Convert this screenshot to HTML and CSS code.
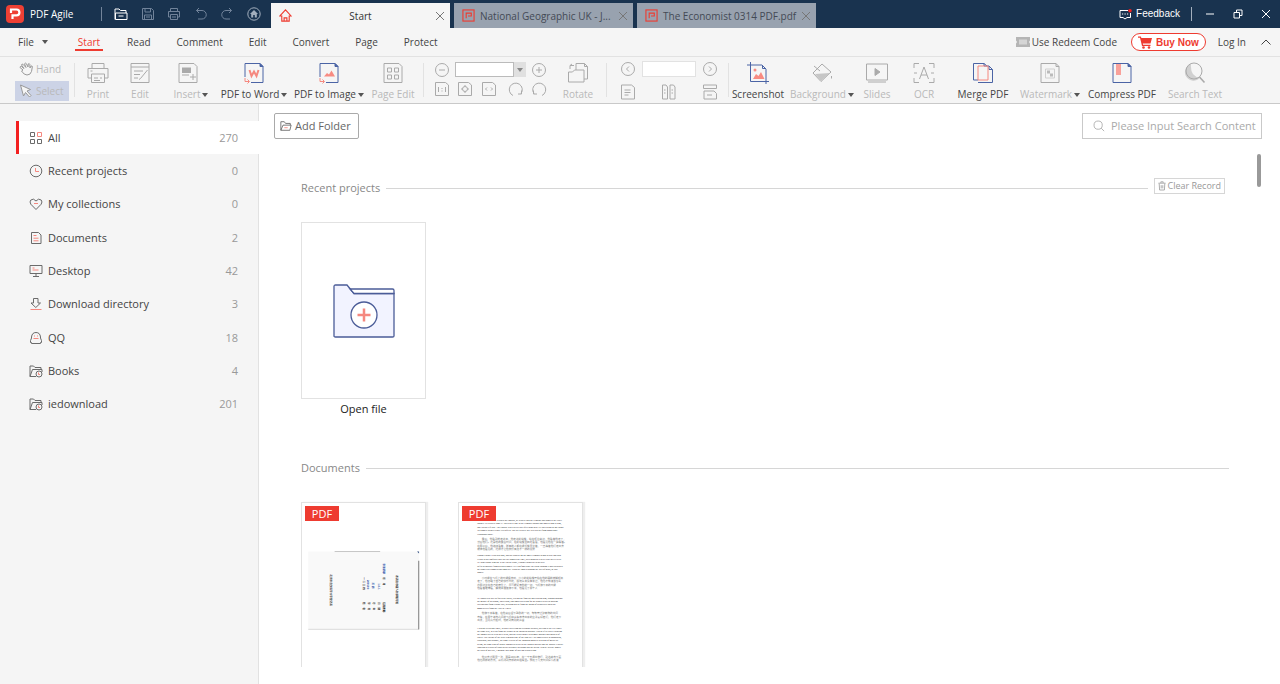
FILE: index.html
```html
<!DOCTYPE html>
<html lang="en">
<head>
<meta charset="utf-8">
<title>PDF Agile</title>
<link rel="stylesheet" href="styles.css">
</head>
<body>
<svg class="defs" aria-hidden="true">
  <symbol id="close" viewBox="0 0 10 10"><path d="M1 1l8 8M9 1l-8 8"/></symbol>
  <symbol id="pdf" viewBox="0 0 14 14"><rect x="1" y="1" width="12" height="12"/><path d="M4.500 10V4.500h5.500v3H6.500"/></symbol>
  <symbol id="clockfolder" viewBox="0 0 14 14"><path d="M1 12.500V2h3.500L6 3.500h6V5M1 12.500L3.500 5.500H13V8M1 12.500h6"/><circle cx="10" cy="10" r="3"/><path class="red" d="M9.500 8.500v2h1.500"/></symbol>
</svg>

<header class="titlebar">
  <svg class="logo" viewBox="0 0 18 18"><rect width="18" height="18" rx="4" fill="#ee4034"/><path d="M5 8V4.500h5.500a2.800 2.800 0 0 1 0 5.800H6.500V14" fill="none" stroke="#fff" stroke-width="2.200"/></svg>
  <h1 class="app-name">PDF Agile</h1>
  <div class="quick">
    <button class="on" aria-label="Open"><svg viewBox="0 0 14 14"><path d="M1 12.500V2h4l1.500 1.500H12V6M1.500 12.500V6H13v6.500zM4.500 9h5"/></svg></button>
    <button aria-label="Save"><svg viewBox="0 0 14 14"><path d="M1.500 1.500h9l2 2v9h-11zM4 1.500v3.500h5.500V1.500M3.500 12.500V8h7v4.500M5 10h4"/></svg></button>
    <button aria-label="Print"><svg viewBox="0 0 14 14"><path d="M3.500 4V1.500h7V4M3.500 10h-2V4.500h11V10h-2M3.500 7.500h7v5h-7zM5 10h4"/></svg></button>
    <button aria-label="Undo"><svg viewBox="0 0 14 14"><path d="M5 1L2.500 3.500 5 6M2.500 3.500H8a4.200 4.200 0 0 1 0 8.500H4"/></svg></button>
    <button aria-label="Redo"><svg viewBox="0 0 14 14"><path d="M9 1l2.500 2.500L9 6M11.500 3.500H6A4.200 4.200 0 0 0 6 12h4"/></svg></button>
    <button class="mid" aria-label="Home"><svg viewBox="0 0 14 14"><circle cx="7" cy="7" r="6.200"/><path d="M7 3L3 7h1.200v3.500h2V8h1.600v2.500h2V7H11z" fill="currentColor" stroke="none"/></svg></button>
  </div>
  <div class="tabs">
    <div class="tab active">
      <svg class="tab-icon" viewBox="0 0 14 14"><path d="M1 7.500L7 1l6 6.500H11V13H3V7.500zM5.500 13V9.500h3V13"/></svg>
      <span class="tab-name">Start</span>
      <button aria-label="Close"><svg><use href="#close"/></svg></button>
    </div>
    <div class="tab">
      <svg class="tab-icon"><use href="#pdf"/></svg>
      <span class="tab-name">National Geographic UK - J...</span>
      <button aria-label="Close"><svg><use href="#close"/></svg></button>
    </div>
    <div class="tab">
      <svg class="tab-icon"><use href="#pdf"/></svg>
      <span class="tab-name">The Economist 0314 PDF.pdf</span>
      <button aria-label="Close"><svg><use href="#close"/></svg></button>
    </div>
  </div>
  <div class="window">
    <button class="feedback"><svg viewBox="0 0 13 11"><path d="M9 1.500H1v7h3l2 1.500 2-1.500h3.500V4M3 5h1.200M5.500 5h1.200M8 5h1.200"/><circle cx="11" cy="1.800" r="1.800" fill="#f32020" stroke="none"/></svg>Feedback</button>
    <button class="win" aria-label="Minimize"><svg viewBox="0 0 10 10"><path d="M1 5h8"/></svg></button>
    <button class="win" aria-label="Restore"><svg viewBox="0 0 10 10"><path d="M1 3.500h5.500V9H1zM3.500 3.500V1H9v5.500H6.500"/></svg></button>
    <button class="win" aria-label="Close window"><svg><use href="#close"/></svg></button>
  </div>
</header>

<nav class="menu">
  <a class="file" href="#">File<i class="caret"></i></a>
  <a class="current" href="#">Start</a>
  <a href="#">Read</a>
  <a href="#">Comment</a>
  <a href="#">Edit</a>
  <a href="#">Convert</a>
  <a href="#">Page</a>
  <a href="#">Protect</a>
  <div class="account">
    <a class="redeem" href="#"><svg viewBox="0 0 14 10"><path d="M0 0h14v3.500l-1 1.500 1 1.500V10H0V6.500L1 5 0 3.500z" fill="#b5b5b5"/><path d="M4 2.500v5M6 2.500v5M8 2.500v5M10 2.500v5" stroke="#f5f5f5"/></svg>Use Redeem Code</a>
    <button class="buy"><svg viewBox="0 0 14 13"><path d="M0 .5h2.800l.6 1.500H14l-1.500 5.500H4.800l.3 1.200h7.400v1.300H4L2 1.800H0z" fill="#ee3b30"/><circle cx="5.500" cy="11.500" r="1.300" fill="#ee3b30"/><circle cx="11" cy="11.500" r="1.300" fill="#ee3b30"/></svg>Buy Now</button>
    <a class="login" href="#">Log In</a>
    <button class="fold" aria-label="Collapse ribbon"><svg viewBox="0 0 10 6"><path d="M.5 5.500L5 1l4.500 4.500"/></svg></button>
  </div>
</nav>

<section class="ribbon">
  <div class="modes">
    <button><svg viewBox="0 0 14 14"><path d="M4 8L1 5.500q0-1.500 1.500-1L5 6.500 2.500 3q.5-1.500 1.500-.7L7 5.500 5.500 1.800Q6.500.5 7.300 1.600L9 5l.2-3q1.200-1 1.600.3L11 6l1-2q1.500-.5 1.300 1l-.8 4.500q-1 3.500-4.500 3.500-3 0-5.500-4z"/></svg>Hand</button>
    <button class="picked"><svg viewBox="0 0 14 14"><path d="M1.500 1l10 4.500-3.500 1.500 4 4.500-1.500 1.500-4-4.500L4.500 12z" fill="#f5f5f5"/></svg>Select</button>
  </div>
  <div class="group">
    <button class="tool w42"><svg viewBox="0 0 22 22"><path d="M5 6V1.500h12V6M4.500 16H1V6.500h20V16h-3.500M4.500 12h13v8.500h-13zM7 16h4M13 16h2M7 18.500h6M3.500 9h2"/></svg><span>Print</span></button>
    <button class="tool w42"><svg viewBox="0 0 22 22"><path d="M2 1.500h18v19H2zM2 5h18M5 9h9M5 12.500h6M5 16h4M18.500 8l-7 8.500-1.500 1"/></svg><span>Edit</span></button>
    <button class="tool w60 insert"><svg viewBox="0 0 22 22"><path d="M2 1.500h15l3 3v16H2zM16 12v6M13 15h6M5 13h7"/><path d="M5 5.500h9V11H5z" fill="#aaa" stroke="none"/></svg><span>Insert<i class="caret"></i></span></button>
    <button class="tool on w66"><svg viewBox="0 0 22 22"><path class="navy" d="M2 15V1.500h15l3 3v16H8"/><path class="navy" d="M17 1.500v3h3z" fill="#4b64a5"/><path class="coral" d="M6.500 8l2 6 2.500-4.500 2.500 4.500 2-6" stroke-width="2"/><path class="coral" d="M2 16v3.500h4M4.500 17.500l2 2-2 2"/></svg><span>PDF to Word<i class="caret"></i></span></button>
    <button class="tool on w84"><svg viewBox="0 0 22 22"><path class="navy" d="M2 15V1.500h15l3 3v16H8"/><path class="navy" d="M17 1.500v3h3z" fill="#4b64a5"/><path d="M6 14.500l3-3.500 2 1.500 2.500-4L17 14.500z" fill="#f88b82" stroke="none"/><path class="coral" d="M2 16v3.500h4M4.500 17.500l2 2-2 2"/></svg><span>PDF to Image<i class="caret"></i></span></button>
    <button class="tool w44"><svg viewBox="0 0 22 22"><path d="M2 1.500h15l3 3v16H2zM5.500 6h4v4h-4zM12.500 6h4v4h-4zM5.500 13h4v4h-4zM12.500 13h4v4h-4z"/></svg><span>Page Edit</span></button>
  </div>
  <div class="group zoomers">
    <div class="stack">
      <div class="line">
        <button aria-label="Zoom out"><svg viewBox="0 0 16 16"><circle cx="8" cy="8" r="6.500"/><path d="M5 8h6"/></svg></button>
        <div class="combo"><input type="text" aria-label="Zoom level"><button aria-label="Zoom levels"><i class="caret"></i></button></div>
        <button aria-label="Zoom in"><svg viewBox="0 0 16 16"><circle cx="8" cy="8" r="6.500"/><path d="M5 8h6M8 5v6"/></svg></button>
      </div>
      <div class="line">
        <button aria-label="Actual size"><svg viewBox="0 0 16 16"><path d="M1.500 1.500h10L14.500 4v10.500h-13zM4.500 6v5M11.500 6v5M8 7v1M8 9.500v1"/></svg></button>
        <button aria-label="Fit page"><svg viewBox="0 0 16 16"><path d="M1.500 1.500h10L14.500 4v10.500h-13z"/><circle cx="8" cy="8" r="2.500"/><path d="M8 4v1.500M8 10.500V12M4 8h1.500M10.500 8H12"/></svg></button>
        <button aria-label="Fit width"><svg viewBox="0 0 16 16"><path d="M1.500 1.500h10L14.500 4v10.500h-13zM6 6.500L4.500 8 6 9.500M10 6.500L11.500 8 10 9.500"/></svg></button>
        <button class="turn" aria-label="Turn right"><svg viewBox="0 0 16 16"><path d="M5 14.500A6.500 6.500 0 1 1 13 12.500M13.500 9.500v3.500H10"/></svg></button>
        <button aria-label="Turn left"><svg viewBox="0 0 16 16"><path d="M11 14.500A6.500 6.500 0 1 0 3 12.500M2.500 9.500v3.500H6"/></svg></button>
      </div>
    </div>
    <button class="tool w44"><svg viewBox="0 0 22 22"><path d="M1.500 10h4l2-2H17v12H1.500zM9 8V1.500h8.500l3 3V17H17M17.500 1.500v3h3M3 7V3.500h4M5 2L3 3.500"/></svg><span>Rotate</span></button>
  </div>
  <div class="group pager">
    <div class="stack">
      <div class="line">
        <button aria-label="Previous page"><svg viewBox="0 0 16 16"><circle cx="8" cy="8" r="6.500"/><path d="M9 5.500L6.500 8 9 10.500"/></svg></button>
        <input class="page-no" type="text" aria-label="Page number">
        <button aria-label="Next page"><svg viewBox="0 0 16 16"><circle cx="8" cy="8" r="6.500"/><path d="M7 5.500L9.500 8 7 10.500"/></svg></button>
      </div>
      <div class="line">
        <button aria-label="Single page"><svg viewBox="0 0 16 16"><path d="M1.500 1h10L14.500 3.500V15h-13zM4.500 6h6M4.500 8.500h6M4.500 11h4"/></svg></button>
        <button aria-label="Two pages"><svg viewBox="0 0 16 16"><path d="M1.500 1H5l1.500 2v12h-5zM9 1h3.500L14 3v12H9zM3 6h1.500M3 9h1.500M10.500 6H12M10.500 9H12"/></svg></button>
        <button aria-label="Continuous pages"><svg viewBox="0 0 16 16"><path d="M1.500 1h13v3.500h-13zM2 7h10l2.500 2.500V15H2zM5 11h5"/></svg></button>
      </div>
    </div>
  </div>
  <div class="group">
    <button class="tool on w58"><svg viewBox="0 0 22 22"><path class="navy" d="M3.500 0v19.500H22M0 3h15l4 4v15M15.500 3v3.500H19"/><path d="M6 17l3-5 2.500 2 2.500-4 3.500 7z" fill="#f88b82" stroke="none"/><circle cx="8" cy="8" r="1.500" fill="#f88b82" stroke="none"/></svg><span>Screenshot</span></button>
    <button class="tool w70"><svg viewBox="0 0 22 22"><path d="M11 2l9 8-10 9.500L2 11zM3 4l6 5"/><path d="M4 12l15-1-9 8z" fill="#c6c6c6" stroke="none"/><path d="M20.500 14v2.500"/></svg><span>Background<i class="caret"></i></span></button>
    <button class="tool w40"><svg viewBox="0 0 22 22"><path d="M0.500 2h21v16H.5zM2 20h18"/><path d="M9 6.500l5 3.500-5 3.500z" fill="#aaa"/></svg><span>Slides</span></button>
    <button class="tool w54"><svg viewBox="0 0 22 22"><path d="M1 6V1.500h5M16 1.500h5V6M21 16v4.500h-5M6 20.500H1V16M1 11h3M18 11h3M6.500 17L11 5l4.500 12M8 13h6"/></svg><span>OCR</span></button>
    <button class="tool on w64"><svg viewBox="0 0 22 22"><path class="navy" d="M6 18H1.500V1.500H12L15 4M17 4l3.500 3.500v13H6M12 1.500V4h5v3.500h3.500"/><path class="coral" d="M6 4h10v14H6z"/></svg><span>Merge PDF</span></button>
    <button class="tool w70"><svg viewBox="0 0 22 22"><path d="M2 1.500h15l3 3v16H2zM17 1.500v3h3"/><path d="M6.500 7h9v9h-9z" stroke="#d0d0d0"/><path d="M8 8.500h3v3H8zM11 11.500h3v3h-3z" fill="#bbb" stroke="none"/></svg><span>Watermark<i class="caret"></i></span></button>
    <button class="tool on w74"><svg viewBox="0 0 22 22"><path class="navy" d="M2 1.500h15l3 3v16H2z"/><path class="navy" d="M17 1.500v3h3z" fill="#4b64a5"/><path d="M5 2h5v11H5z" fill="#f9a19a" stroke="none"/></svg><span>Compress PDF</span></button>
    <button class="tool w72"><svg viewBox="0 0 22 22"><path d="M7 2a8.500 8.500 0 1 0 9 13.500Q6 15 7 2z" fill="#d0d0d0" stroke="none"/><circle cx="10" cy="9" r="8"/><path d="M15.500 15l5 5.500" stroke-width="1.600"/></svg><span>Search Text</span></button>
  </div>
</section>

<div class="body">
  <aside class="sidebar">
    <ul class="places">
      <li class="active"><a href="#"><svg viewBox="0 0 14 14"><path d="M1.500 1.500h4v4h-4zM1.500 8.500h4v4h-4zM8.500 8.500h4v4h-4z"/><path class="red" d="M8.500 1.500h4v4h-4z"/></svg><span>All</span><b>270</b></a></li>
      <li><a href="#"><svg viewBox="0 0 14 14"><circle cx="7" cy="7" r="5.800"/><path class="red" d="M6.500 4v3.500H10"/></svg><span>Recent projects</span><b>0</b></a></li>
      <li><a href="#"><svg viewBox="0 0 14 14"><path d="M7 12.500L1.800 7.200Q.3 4.800 1.800 3 4.500 0.800 7 4 9.500.8 12.200 3q1.500 1.800 0 4.200z"/><path class="red" d="M5 6.500h4"/></svg><span>My collections</span><b>0</b></a></li>
      <li><a href="#"><svg viewBox="0 0 14 14"><path d="M2.500 1.500h7l2.500 2.500v8.500h-9.500z"/><path class="red" d="M4.500 4.500h3M4.500 7.200h5M4.500 9.800h5"/></svg><span>Documents</span><b>2</b></a></li>
      <li><a href="#"><svg viewBox="0 0 14 14"><path d="M1 1.500h12v8H1zM7 9.500V12M4 12.500h6"/><path class="red" d="M3.500 4h2M3.500 6h6"/></svg><span>Desktop</span><b>42</b></a></li>
      <li><a href="#"><svg viewBox="0 0 14 14"><path d="M4.500 1.500h4.500V6h2.500L6.800 10.500 2 6h2.500z"/><path class="red" d="M1.500 12.500h11"/></svg><span>Download directory</span><b>3</b></a></li>
      <li><a href="#"><svg viewBox="0 0 14 14"><path d="M2.500 7V6q.5-4.500 4.500-4.500t4.500 4.500v1q1.500 3 1 4.500h-1v1h-9v-1h-1q-.5-1.500 1-4.500z"/><path class="red" d="M5.500 4.500v1M8.500 4.500v1M4.500 7.500h5"/></svg><span>QQ</span><b>18</b></a></li>
      <li><a href="#"><svg><use href="#clockfolder"/></svg><span>Books</span><b>4</b></a></li>
      <li><a href="#"><svg><use href="#clockfolder"/></svg><span>iedownload</span><b>201</b></a></li>
    </ul>
  </aside>

  <main class="main">
    <div class="actions">
      <button class="add"><svg viewBox="0 0 14 14"><path d="M1 12V2h4l1.500 2H12v2M1 12l2.500-6H13l-1.500 6z"/><path class="red" d="M5 9h4"/></svg>Add Folder</button>
      <label class="search"><svg viewBox="0 0 14 14"><circle cx="6" cy="6" r="4.800"/><path d="M9.500 9.500l3.500 3.500"/></svg><input type="text" aria-label="Search" placeholder="Please Input Search Content"></label>
    </div>
    <div class="scroller">
      <section class="shelf">
        <div class="heading recent"><h2>Recent projects</h2><hr><button class="clear"><svg viewBox="0 0 10 12"><path d="M.5 2.500h9M3.500 2V.8h3V2M1.500 3l.5 8h6l.5-8M4 5v4M6 5v4"/></svg>Clear Record</button></div>
        <div class="cards">
          <figure class="open">
            <div class="card">
              <svg viewBox="0 0 62 54"><path d="M1 52V2.500Q1 1 2.500 1H14l7 8.500h40V52q0 1-1.500 1h-57Q1 53 1 52z" fill="#f2f3ff"/><path d="M17 5h42.500q1.500 0 1.500 1.500v3H21z" fill="#fff"/><circle cx="31" cy="31" r="13" fill="#fff"/><path d="M31 24.500v13M24.500 31h13" stroke="#f5887f" stroke-width="2.500"/></svg>
            </div>
            <figcaption>Open file</figcaption>
          </figure>
        </div>
      </section>
      <section class="shelf">
        <div class="heading"><h2>Documents</h2><hr></div>
        <div class="cards">
          <div class="card doc">
            <span class="badge">PDF</span>
            <svg class="scan" viewBox="35 157 373 493">
              <rect x="54" y="302" width="336" height="237" fill="#f9f9f9"/>
              <path d="M54 538h336" stroke="#ccc" stroke-width="2"/><path d="M134 302h138" stroke="#aaa" stroke-width="2"/><path d="M389 330v208" stroke="#777" stroke-width="3"/><path d="M384 302h6v6z" fill="#3b5687"/>
              <g class="cjk strong">
                <text transform="translate(119 371) rotate(90)">北京市自然科学大学登记表</text>
                <text transform="translate(320 374) rotate(90)">本表由申请人如实填写签</text>
                <text transform="translate(219 380) rotate(90)">一 二 三 四</text>
                <text transform="translate(219 455) rotate(90)">姓 &#160; &#160; 名</text>
                <text transform="translate(234 455) rotate(90)">学 &#160; &#160; 号</text>
                <text transform="translate(250 455) rotate(90)">专 &#160; &#160; 业</text>
                <text transform="translate(266 455) rotate(90)">日 &#160; &#160; 期</text>
                <text transform="translate(282 380) rotate(90)">年 &#160; &#160; 月</text>
                <text transform="translate(282 455) rotate(90)">指导教师</text>
                <g class="ink">
                  <text transform="translate(231 388) rotate(90)">200106</text>
                  <text transform="translate(246 396) rotate(90)">王 明</text>
                  <text transform="translate(264 398) rotate(90)">1.6.1</text>
                  <text transform="translate(280 338) rotate(90)">张海明印</text>
                </g>
              </g>
            </svg>
          </div>
          <div class="card doc">
            <span class="badge">PDF</span>
            <svg class="scan" viewBox="27 22 373 492">
              <g class="latin">
                <text x="138" y="74">I reached the embark, he walked into the terminal and stood at the ticket</text>
                <text x="82" y="84">counter. He'd surely done it. This was a time in the terminal around and looked right at him,</text>
                <text x="82" y="94">and I heard left side. The runway was a better day after them then. He knew him sat on Found</text>
                <text x="82" y="105">Welcomed Identity-Store Greenfield. Just as a waiter: her year did her from Montessori</text>
                <text x="82" y="115">Grandson's share.</text>
                <text x="82" y="181">Gandhi/Found I read 8th light, and the runway on the small terminal began to blur and spin</text>
                <text x="82" y="192">events to his confused until his joy ignored the time, pretending he'd never sent their letters.</text>
                <text x="82" y="202">He didn't know who she is do. On the plane, Gandhi/Found sat in his seat</text>
                <text x="82" y="213">as far as possible from his own Moses. He'll no food since the plane through it had slackened</text>
                <text x="82" y="223">the propellers rumored and soon still. When he looked through the wall of glass, he saw</text>
                <text x="82" y="233">Moses.</text>
                <text x="82" y="310">He stopped to wait as fast as he could, leaving the familiar ones behind him, rushing through</text>
                <text x="82" y="320">the middle of buildings, trolleyards, and amateurs trying for the planes between Muslim</text>
                <text x="82" y="330">Orleans and from Garage Bay, stepping out he from the sound of departures when the</text>
                <text x="82" y="340">moon settles from the First de Floyd.</text>
                <text x="82" y="400">I was on Sierra only once, as older travelling on a scandal prepaid, arriving at the city under</text>
                <text x="82" y="410">the same way, in a cab from the airport to the southern suburbs. I spent a few days exploring</text>
                <text x="82" y="420">the images streets with their webs, and the plaza corner with small garages and pockets of</text>
                <text x="82" y="430">clover. The energy of the place reminded me of the cool air. Like most places in Manhattan,</text>
                <text x="82" y="439">claustrous, and straggle, the same vertical of the unknown marked with hint of medieval</text>
                <text x="82" y="449">steam, the same kind of people organized between the chosen tourists and the Middle Easters.</text>
                <text x="82" y="458">enabling in a study of sand between blocky buildings and the ocean. When I picture Moses</text>
                <text x="82" y="468">the back of our taxi, I imagine that some of this too reached him.</text>
              </g>
              <g class="cjk">
                <text x="96" y="132">最后，他看到她走进来，他走进航站楼，站在柜台旁边，他看着他走了，</text>
                <text x="82" y="142">然后他们。这是他的最后时间，在航站楼里四处看看，他看见他在一旁等着。</text>
                <text x="82" y="152">在那以后，他继续看着，所有的人都在候机楼里坐着，一直等着他们走出去</text>
                <text x="82" y="163">就像他看见的，这样才让他觉得有点不一样的感觉</text>
                <text x="96" y="250">小时候在飞机上的时候很激动，小小的航站楼开始在他的眼前模糊起来</text>
                <text x="82" y="260">走了，他忽略了自己的快乐时光，假装从来没有来过，他也不知道该怎么</text>
                <text x="82" y="271">办那边坐在自己的座位上，尽可能远离他的一切，飞机停下来的时候</text>
                <text x="82" y="281">他看着玻璃墙，螺旋桨慢慢停下来，他看见了那个人</text>
                <text x="96" y="357">他停下来等着，在他身后留下熟悉的一切，匆匆穿过建筑物的中间</text>
                <text x="82" y="367">电车，在那个城市之间的飞机和从车库湾出来的业余爱好者们，他们走下</text>
                <text x="82" y="378">出发，当月亮升起时，他听到离别的声音</text>
                <text x="96" y="488">他只去过那里一次，那是2001年，在一个丑闻中旅行，到达城市下面</text>
                <text x="82" y="498">他也同样的方式，从机场到南郊的出租车里。我花了几天时间探索街道</text>
              </g>
            </svg>
          </div>
        </div>
      </section>
      <span class="thumb"></span>
    </div>
  </main>
</div>
</body>
</html>
```
FILE: styles.css
```css
* { box-sizing: border-box; }
body {
  margin: 0;
  height: 100vh;
  display: flex;
  flex-direction: column;
  overflow: hidden;
  background: #fff;
  color: #444;
  font: 10px/14px "Open Sans", "Noto Sans", "Noto Sans CJK SC", sans-serif;
}
button, input { font: inherit; color: inherit; margin: 0; padding: 0; border: 0; background: none; }
a { color: inherit; text-decoration: none; }
h1, h2, ul, figure { margin: 0; padding: 0; font-size: inherit; font-weight: normal; list-style: none; }
svg { display: block; flex: none; fill: none; stroke: currentColor; }
.defs { position: absolute; width: 0; height: 0; }
.red, .coral { stroke: #f5887f; }
.navy { stroke: #4b64a5; }
.caret { display: inline-block; border: 3px solid transparent; border-top: 4px solid #555; border-bottom: 0; }

.titlebar { flex: none; height: 28px; display: flex; align-items: center; padding-left: 6px; background: #19334f; color: #fff; }
.logo { width: 18px; height: 18px; stroke: none; }
.app-name { width: 71px; margin-left: 6px; }
.quick { display: flex; align-items: center; justify-content: space-between; height: 14px; width: 170px; padding: 0 10px 0 12px; border-left: 1px solid #73849a; }
.quick button { color: #71839a; }
.quick .on { color: #fff; }
.quick .mid { color: #a3afbd; }
.quick svg { width: 14px; height: 14px; }
.tabs { display: flex; align-self: flex-end; gap: 4px; }
.tab { width: 179px; height: 25px; display: flex; align-items: center; padding: 0 5px 0 8px; gap: 5px; background: #98a2af; color: #444a55; }
.tab.active { background: #f5f5f5; color: #333; }
.tab.active .tab-name { text-align: center; padding-right: 6px; }
.tab-icon { width: 13px; height: 13px; color: #ee3b30; stroke-width: 1.2; }
.tab-name { flex: 1; white-space: nowrap; }
.tab button { color: #777; }
.tab button svg { width: 10px; height: 10px; }
.window { margin-left: auto; display: flex; align-items: center; }
.feedback { display: flex; align-items: center; gap: 4px; height: 14px; padding-right: 11px; border-right: 1px solid #a3afbd; font-family: "Liberation Sans", sans-serif; }
.feedback svg { width: 13px; height: 11px; }
.win { width: 28px; display: flex; justify-content: center; }
.window .feedback + .win { margin-left: 4px; }
.win svg { width: 10px; height: 10px; }

.menu { flex: none; height: 29px; display: flex; align-items: center; gap: 26px; padding-left: 18px; background: #f5f5f5; border-bottom: 1px solid #e2e2e2; }
.file { display: flex; align-items: center; gap: 8px; margin-right: 3px; }
.menu .current { color: #ee3b30; padding: 0 3px; margin: 2px -2px 0; border-bottom: 2px solid #ee3b30; }
.account { margin-left: auto; display: flex; align-items: center; padding-right: 9px; }
.redeem { display: flex; align-items: center; gap: 2px; }
.redeem svg { width: 14px; height: 10px; stroke: none; }
.buy { display: flex; align-items: center; gap: 4px; height: 18px; margin: 0 12px 0 14px; padding: 0 6px; border: 1px solid #ee3b30; border-radius: 9px; color: #ee3b30; background: #fff; font: bold 10px "Liberation Sans", sans-serif; }
.buy svg { width: 14px; height: 13px; stroke: none; }
.fold { margin-left: 15px; }
.fold svg { width: 10px; height: 6px; }

.ribbon { flex: none; height: 47px; display: flex; align-items: center; background: #f5f5f5; border-bottom: 1px solid #c9c9c9; color: #b9b9b9; white-space: nowrap; }
.modes { width: 74px; padding-left: 15px; display: flex; flex-direction: column; gap: 2px; }
.modes button { width: 54px; height: 20px; display: flex; align-items: center; gap: 3px; padding-left: 4px; }
.modes .picked { background: #ccd3e6; }
.modes svg { width: 14px; height: 14px; color: #999; }
.group { height: 34px; display: flex; align-items: center; padding: 0 8px 0 2px; border-left: 1px solid #e2e2e2; }
.group:last-child { padding-left: 0; }
.tool { flex: none; display: flex; flex-direction: column; align-items: center; gap: 3px; padding-top: 3px; }
.tool > svg { width: 22px; height: 22px; color: #aaa; }
.tool .caret { margin-left: 2px; vertical-align: 1px; }
.tool.on { color: #444; }
.insert > svg { margin-right: 6px; }
.w40 { width: 40px; } .w42 { width: 42px; } .w44 { width: 44px; } .w54 { width: 54px; }
.w58 { width: 58px; } .w60 { width: 60px; } .w64 { width: 64px; } .w66 { width: 66px; }
.w70 { width: 70px; } .w72 { width: 72px; } .w74 { width: 74px; } .w84 { width: 84px; }
.stack { display: flex; flex-direction: column; gap: 3px; color: #aaa; }
.stack svg { width: 16px; height: 16px; }
.line { display: flex; align-items: center; justify-content: space-between; }
.zoomers { padding: 0 6px 0 10px; width: 183px; justify-content: space-between; }
.zoomers .stack { width: 113px; padding-bottom: 2px; }
.turn { margin-left: 4px; }
.combo { display: flex; width: 71px; height: 15px; }
.combo input { width: 59px; background: #fff; border: 1px solid #bbb; }
.combo button { flex: 1; display: flex; align-items: center; justify-content: center; background: #e0e0e0; }
.combo .caret { border-top-color: #888; }
.pager { width: 122px; padding: 0 10px 0 13px; }
.pager .stack { flex: 1; gap: 7px; }
.page-no { width: 54px; height: 16px; background: #fff; border: 1px solid #e2e2e2; }

.body { flex: 1; min-height: 0; display: flex; }
.sidebar { flex: none; width: 259px; padding-top: 17px; background: #f5f5f5; border-right: 1px solid #e2e2e2; }
.places { display: grid; min-height: 300px; grid-auto-rows: 1fr; margin-left: 16px; font-size: 11px; }
.places li { display: flex; }
.places .active { background: #fff; border-left: 3px solid #f32020; margin-right: -1px; }
.places a { flex: 1; display: flex; align-items: center; gap: 5px; padding: 0 20px 0 13px; }
.places .active a { padding: 0 21px 0 10px; }
.places svg { width: 14px; height: 14px; color: #6b6b6b; }
.places span { flex: 1; }
.places b { font-weight: normal; color: #999; }

.main { flex: 1; min-width: 0; display: flex; flex-direction: column; padding: 9px 18px 17px 15px; font-size: 11px; }
.actions { flex: none; display: flex; justify-content: space-between; }
.add { display: flex; align-items: center; gap: 3px; height: 26px; padding: 0 7px 0 5px; border: 1px solid #aaa; border-radius: 2px; color: #666; }
.add svg { width: 12px; height: 12px; }
.search { width: 180px; height: 26px; display: flex; align-items: center; gap: 6px; padding-left: 10px; border: 1px solid #c9c9c9; color: #aaa; }
.search svg { width: 12px; height: 12px; }
.search input { flex: 1; min-width: 0; outline: 0; }
.search input::placeholder { color: #aaa; opacity: 1; }
.scroller { position: relative; flex: 1; min-height: 0; overflow: hidden; padding: 39px 33px 0 27px; }
.thumb { position: absolute; right: 1px; top: 15px; width: 4px; height: 33px; border-radius: 2px; background: #999; }
.heading { height: 20px; display: flex; align-items: center; gap: 6px; color: #888; }
.recent { padding-right: 4px; }
.recent hr { margin-right: -3px; }
.heading hr { flex: 1; margin: 0; border: 0; border-top: 1px solid #d6d6d6; }
.clear { display: flex; align-items: center; gap: 1px; height: 16px; padding: 0 3px; margin-bottom: 4px; border: 1px solid #d6d6d6; color: #999; font-size: 9px; }
.clear svg { width: 8px; height: 10px; }
.cards { display: flex; gap: 32px; padding: 24px 0 42px; }
.card { width: 125px; height: 177px; border: 1px solid #e2e2e2; display: flex; align-items: center; justify-content: center; }
.open svg { width: 62px; height: 54px; color: #4b5c98; stroke-width: 1.300; }
figcaption { margin-top: 3px; color: #222; text-align: center; }
.doc { position: relative; align-items: flex-start; box-shadow: 2px 0 1px #eee; }
.badge { position: absolute; left: 3px; top: 3px; width: 34px; height: 15px; line-height: 15px; text-align: center; color: #fff; background: #ee3b30; }
.scan { width: 123px; height: 164px; stroke: none; }
.latin { font-family: "Liberation Serif", serif; font-size: 7px; fill: #111; }
.cjk { font-family: "Noto Sans CJK SC", sans-serif; font-size: 8px; fill: #777; }
.strong { font-weight: bold; fill: #333; }
.cjk .ink { fill: #2347a5; }
```
